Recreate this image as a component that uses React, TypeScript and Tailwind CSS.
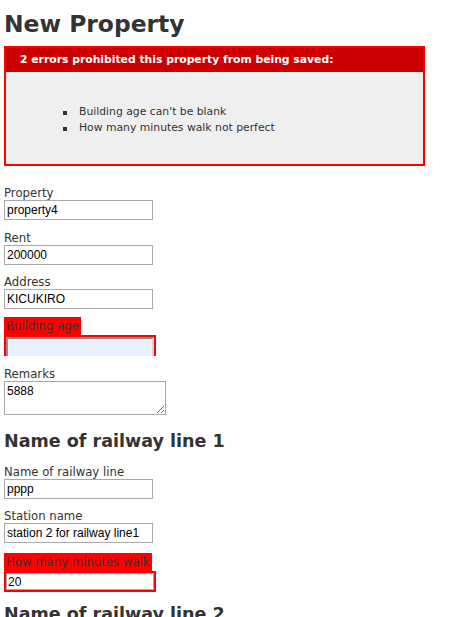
import React from "react";

const verdana = "font-['DejaVu_Sans','Verdana',sans-serif]";
const arial = "font-['Liberation_Sans',Arial,sans-serif]";

function Label({ text }: { text: string }) {
  return <label className="block h-[17px] pt-[2px] text-[11.7px] leading-[17px]">{text}</label>;
}

function TextInput({ value }: { value: string }) {
  return (
    <input
      readOnly
      value={value}
      className={`block h-[20px] w-[149px] border border-[#a9a9a9] bg-white px-[2px] text-[12px] leading-[18px] text-black outline-none ${arial}`}
    />
  );
}

function Field({ label, value, className = "" }: { label: string; value: string; className?: string }) {
  return (
    <div className={className}>
      <Label text={label} />
      <TextInput value={value} />
    </div>
  );
}

function ErrorField({
  label,
  value,
  blank,
  className = "",
}: {
  label: string;
  value: string;
  blank?: boolean;
  className?: string;
}) {
  return (
    <div className={className}>
      <div className="h-[18px] w-fit bg-[#ff0000] px-[2px] pt-[1px] text-[11.7px] leading-[17px] text-[#333]">{label}</div>
      {blank ? (
        <div className="h-[21px] w-[152px] overflow-hidden bg-[#ff0000] p-[2px] pb-0">
          <input
            readOnly
            value={value}
            className={`block h-[22px] w-[148px] border-2 border-[#8f8f8f] border-r-[#d4d4d4] border-b-[#d4d4d4] bg-[#e8f0fe] px-[2px] text-[12px] text-black outline-none ${arial}`}
          />
        </div>
      ) : (
        <div className="w-[152px] bg-[#ff0000] p-[2px]">
          <input
            readOnly
            value={value}
            className={`block h-[17px] w-[148px] border border-[#a9a9a9] bg-white px-[1px] text-[12px] leading-[15px] text-black outline-none ${arial}`}
          />
        </div>
      )}
    </div>
  );
}

export default function App() {
  const errors = ["Building age can't be blank", "How many minutes walk not perfect"];

  return (
    <div className={`min-h-screen bg-white pl-[4px] text-[#333] ${verdana}`}>
      <h1 className="mt-[11px] h-[26px] text-[23.4px] font-bold leading-[26px]">New Property</h1>

      <div className="mt-[9px] w-[421px] border-2 border-[#ff0000] bg-[#efefef]">
        <h2 className="h-[24px] bg-[#cc0000] pl-[14px] text-[10.8px] font-bold leading-[24px] text-white">
          2 errors prohibited this property from being saved:
        </h2>
        <ul className="pb-[28px] pl-[57px] pt-[32px]">
          {errors.map((e) => (
            <li key={e} className="flex items-start text-[10.8px] leading-[16px]">
              <span className="mr-[12px] mt-[7px] h-[4px] w-[4px] shrink-0 bg-[#333]" />
              {e}
            </li>
          ))}
        </ul>
      </div>

      <form className="pb-10">
        <Field label="Property" value="property4" className="mt-[17px]" />
        <Field label="Rent" value="200000" className="mt-[8px]" />
        <Field label="Address" value="KICUKIRO" className="mt-[7px]" />
        <ErrorField label="Building age" value="" blank className="mt-[8px]" />

        <div className="mt-[8px]">
          <Label text="Remarks" />
          <textarea
            readOnly
            value="5888"
            className={`block h-[34px] w-[162px] border border-[#a9a9a9] bg-white px-[2px] pt-[2px] text-[12px] leading-[14px] text-black outline-none ${arial}`}
          />
        </div>

        <h2 className="mt-[16px] h-[20px] text-[17.55px] font-bold leading-[20px]">Name of railway line 1</h2>
        <Field label="Name of railway line" value="pppp" className="mt-[11px]" />
        <Field label="Station name" value="station 2 for railway line1" className="mt-[7px]" />
        <ErrorField label="How many minutes walk" value="20" className="mt-[10px]" />

        <h2 className="mt-[12px] h-[20px] text-[17.55px] font-bold leading-[20px]">Name of railway line 2</h2>
        <Field label="Name of railway line" value="" className="mt-[13px]" />
        <Field label="Station name" value="" className="mt-[7px]" />
        <Field label="How many minutes walk" value="" className="mt-[7px]" />
      </form>
    </div>
  );
}
